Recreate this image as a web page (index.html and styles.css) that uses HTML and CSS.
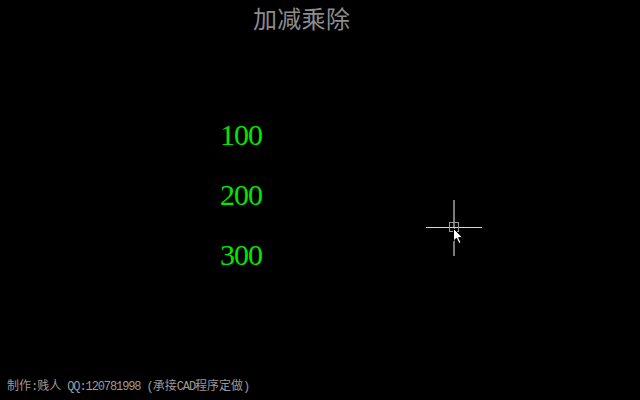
FILE: index.html
```html
<!DOCTYPE html>
<html lang="zh">
<head>
<meta charset="utf-8">
<title>加减乘除</title>
<link rel="stylesheet" href="styles.css">
</head>
<body>
<div class="screen">
  <div class="title">加减乘除</div>
  <div class="numbers">
    <div class="num">100</div>
    <div class="num">200</div>
    <div class="num">300</div>
  </div>
  <div class="footer"><span class="cjk">制作</span><span class="asc">:</span><span class="cjk">贱人</span><span class="asc"> QQ:120781998 (</span><span class="cjk">承接</span><span class="asc">CAD</span><span class="cjk">程序定做</span><span class="asc">)</span></div>

  <div class="crosshair">
    <div class="ch-v"></div>
    <div class="ch-h"></div>
    <div class="ch-box"></div>
    <svg class="cursor" width="12" height="18" viewBox="0 0 12 18">
      <path d="M0.5 0.5 L0.5 13 L3.5 10.2 L6 15.5 L8 14.6 L5.6 9.6 L9.5 9.6 Z" fill="#fff" stroke="#000" stroke-width="1"/>
    </svg>
  </div>
</div>
</body>
</html>
```

FILE: styles.css
```css
html, body {
  margin: 0;
  padding: 0;
  background: #000;
}
.screen {
  position: relative;
  width: 640px;
  height: 400px;
  background: #000;
  display: flex;
  flex-direction: column;
  overflow: hidden;
}
.title {
  margin-top: 6px;
  padding-left: 253px;
  font-family: "Noto Sans CJK SC", sans-serif;
  font-size: 24px;
  line-height: 24px;
  color: #8c8c8c;
  letter-spacing: 0.3px;
}
.numbers {
  margin-top: 75px;
  padding-left: 220px;
  display: flex;
  flex-direction: column;
}
.num {
  font-family: "Liberation Serif", serif;
  font-size: 30px;
  line-height: 60px;
  height: 60px;
  color: #00e800;
  letter-spacing: -1px;
}
.footer {
  margin-top: auto;
  padding-left: 7px;
  padding-bottom: 7px;
  height: 16px;
  line-height: 16px;
  color: #9a9a9a;
  white-space: pre;
}
.footer .cjk {
  font-family: "Noto Sans CJK SC", sans-serif;
  font-size: 12px;
}
.footer .asc {
  font-family: "Liberation Mono", monospace;
  font-size: 12px;
  letter-spacing: -1.1px;
}
.crosshair {
  position: absolute;
  left: 426px;
  top: 200px;
  width: 56px;
  height: 57px;
}
.ch-v {
  position: absolute;
  left: 27px;
  top: 0;
  width: 2px;
  height: 56px;
  background: #7a7a7a;
}
.ch-h {
  position: absolute;
  left: 0;
  top: 27px;
  width: 56px;
  height: 1px;
  background: #d8d8d8;
}
.ch-box {
  position: absolute;
  left: 23px;
  top: 22px;
  width: 8px;
  height: 8px;
  border: 1px solid #9a9a9a;
}
.cursor {
  position: absolute;
  left: 27px;
  top: 28px;
}
```
